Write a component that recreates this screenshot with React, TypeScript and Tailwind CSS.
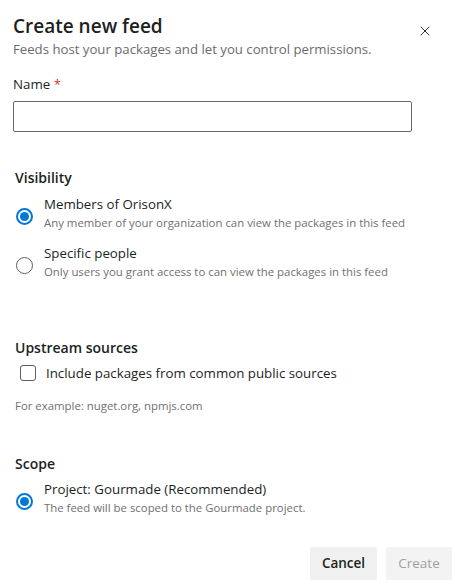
import { X } from "lucide-react"

function Radio({ checked }: { checked?: boolean }) {
  return checked ? (
    <span className="w-[17px] h-[17px] rounded-full border-[2px] border-[#0078d4] flex items-center justify-center shrink-0 mt-[6px]">
      <span className="w-[9px] h-[9px] rounded-full bg-[#0078d4]" />
    </span>
  ) : (
    <span className="w-[17px] h-[17px] rounded-full border border-[#605e5c] shrink-0 mt-[6px]" />
  )
}

function Option({ title, desc, checked }: { title: string; desc: string; checked?: boolean }) {
  return (
    <div className="flex items-center gap-[11px] pl-[16px]">
      <Radio checked={checked} />
      <div className="flex flex-col">
        <span className="text-[13.3px] leading-[19px] text-[#201f1e]">{title}</span>
        <span className="text-[11.4px] leading-[17px] text-[#707070]">{desc}</span>
      </div>
    </div>
  )
}

export default function App() {
  return (
    <div className="w-[455px] h-[588px] bg-white relative font-['Open_Sans',sans-serif] text-[#201f1e]">
      <div className="flex items-start justify-between pl-[13px] pr-[22px] pt-[12px]">
        <div>
          <h1 className="text-[19px] leading-[28px] font-semibold">Create new feed</h1>
          <p className="text-[13.2px] leading-[18px] text-[#6b6b6b]">
            Feeds host your packages and let you control permissions.
          </p>
        </div>
        <X size={16} strokeWidth={1.5} className="mt-[11px] text-[#323130]" />
      </div>

      <div className="pl-[13px] mt-[16px]">
        <label className="text-[13.3px] leading-[20px] block">
          Name <span className="text-[#d13438]">*</span>
        </label>
        <input className="mt-[7px] w-[399px] h-[31px] border border-[#666] rounded-[2px] outline-none px-2 text-[14px]" />
      </div>

      <div className="mt-[36px]">
        <h2 className="pl-[15px] text-[14px] leading-[20px] font-semibold">Visibility</h2>
        <div className="mt-[7px] flex flex-col gap-[13px]">
          <Option
            checked
            title="Members of OrisonX"
            desc="Any member of your organization can view the packages in this feed"
          />
          <Option
            title="Specific people"
            desc="Only users you grant access to can view the packages in this feed"
          />
        </div>
      </div>

      <div className="mt-[58px]">
        <h2 className="pl-[15px] text-[14px] leading-[20px] font-semibold">Upstream sources</h2>
        <div className="mt-[5px] flex items-center gap-[10px] pl-[20px]">
          <span className="w-[16px] h-[16px] rounded-[3px] border border-[#605e5c]" />
          <span className="text-[13.3px] leading-[20px]">Include packages from common public sources</span>
        </div>
        <p className="pl-[15px] mt-[15px] text-[11.4px] leading-[16px] text-[#707070]">
          For example: nuget.org, npmjs.com
        </p>
      </div>

      <div className="mt-[40px]">
        <h2 className="pl-[15px] text-[14px] leading-[20px] font-semibold">Scope</h2>
        <div className="mt-[6px]">
          <Option
            checked
            title="Project: Gourmade (Recommended)"
            desc="The feed will be scoped to the Gourmade project."
          />
        </div>
      </div>

      <div className="absolute right-[3px] bottom-[8px] flex gap-[9px]">
        <button className="w-[67px] h-[33px] rounded-[2px] bg-[#f0f0f0] text-[13.5px] font-semibold text-[#201f1e]">
          Cancel
        </button>
        <button className="w-[66px] h-[33px] rounded-[2px] bg-[#f3f3f3] text-[13.5px] text-[#a19f9d]">
          Create
        </button>
      </div>
    </div>
  )
}
